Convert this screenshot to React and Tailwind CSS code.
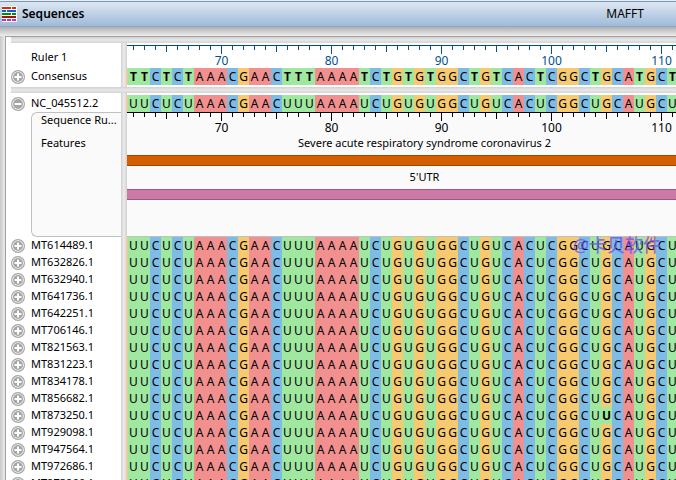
import clsx from "clsx";

const FIRST_POSITION = 62;
const RNA = "UUCUCUAAACGAACUUUAAAAUCUGUGUGGCUGUCACUCGGCUGCAUGCU";
const CONSENSUS = RNA.replaceAll("U", "T");

const sequences = [
  { name: "MT614489.1", bases: RNA },
  { name: "MT632826.1", bases: RNA },
  { name: "MT632940.1", bases: RNA },
  { name: "MT641736.1", bases: RNA },
  { name: "MT642251.1", bases: RNA },
  { name: "MT706146.1", bases: RNA },
  { name: "MT821563.1", bases: RNA },
  { name: "MT831223.1", bases: RNA },
  { name: "MT834178.1", bases: RNA },
  { name: "MT856682.1", bases: RNA },
  { name: "MT873250.1", bases: RNA.slice(0, 43) + "U" + RNA.slice(44), variant: 43 },
  { name: "MT929098.1", bases: RNA },
  { name: "MT947564.1", bases: RNA },
  { name: "MT972686.1", bases: RNA },
  { name: "MT973966.1", bases: RNA },
];

const baseColors = {
  A: "bg-[#f29090]",
  C: "bg-[#7ebce8]",
  G: "bg-[#f8ca70]",
  U: "bg-[#a0e8a0]",
  T: "bg-[#a0e8a0]",
};

function ToggleButton({ name, open }) {
  return (
    <button
      type="button"
      aria-expanded={Boolean(open)}
      aria-label={name}
      className="flex w-5 shrink-0 items-center"
    >
      <svg viewBox="0 0 14 14" className="size-3.5 shrink-0">
        <circle cx="7" cy="7" r="6.4" fill="#fff" stroke="#a6a6a6" strokeWidth="1.2" />
        <circle cx="7" cy="7" r="5" fill="#a6a6a6" />
        <path d={open ? "M3.5 7h7" : "M3.5 7h7M7 3.5v7"} stroke="#fff" strokeWidth="2" />
      </svg>
    </button>
  );
}

function Label({ name, open }) {
  return (
    <div className="flex h-[17px] items-center pl-[5px]">
      <ToggleButton name={name} open={open} />
      <span className="pb-0.5 leading-[15px]">{name}</span>
    </div>
  );
}

function Bases({ bases, variant }) {
  return (
    <div className="flex h-[17px] border-l border-[#f8ca70] text-[12px] leading-[17px]">
      {bases.split("").map((base, i) => (
        <span
          key={i}
          className={clsx(
            "w-[11px] shrink-0 text-center",
            baseColors[base],
            (base === "T" || i === variant) && "font-bold"
          )}
        >
          {base}
        </span>
      ))}
    </div>
  );
}

function Ruler({ blue }) {
  return (
    <div
      className={clsx(
        "flex h-[23px] border-t pl-px text-[12px]",
        blue ? "border-[#004a80] text-[#005090]" : "border-black text-black"
      )}
    >
      {RNA.split("").map((_, i) => {
        const position = FIRST_POSITION + i;
        const major = position % 10 === 0;
        const medium = position % 5 === 0;
        return (
          <div key={i} className="flex w-[11px] shrink-0 flex-col items-center">
            <div
              className={clsx(
                "w-px shrink-0 bg-current",
                major ? "h-2" : medium ? "h-1.5" : "h-1"
              )}
            />
            {major && <span className="leading-[14px]">{position}</span>}
          </div>
        );
      })}
    </div>
  );
}

function Splitter() {
  return (
    <div className="h-1.5 w-full shrink-0 bg-linear-to-b from-[#d0d0d0] via-[#e8e8e8] to-[#d4d4d4]" />
  );
}

function Divider() {
  return (
    <div className="w-1.5 shrink-0 bg-linear-to-r from-[#d0d0d0] via-[#ececec] to-[#d0d0d0]" />
  );
}

function TitleBar() {
  return (
    <header className="flex h-[26px] shrink-0 items-center border-t border-b border-t-[#7299bd] border-b-[#8aa9c8] bg-linear-to-b from-[#dde7f2] to-[#9fbbd9] pl-[2px] text-[12px]">
      <svg viewBox="0 0 15 16" className="h-4 w-[15px]">
        <rect width="15" height="16" rx="1" fill="#fff" />
        <path d="M0 2h9M10 2h4" stroke="#e62600" strokeWidth="2" />
        <path d="M0 5h4M5 5h9" stroke="#0066dc" strokeWidth="2" />
        <path d="M0 8h9M10 8h4" stroke="#009000" strokeWidth="2" />
        <path d="M0 11h14" stroke="#a01800" strokeWidth="2" />
        <path d="M0 14h4M5 14h4M10 14h4" stroke="#d030a0" strokeWidth="2" />
      </svg>
      <h1 className="flex-1 pb-0.5 pl-[5px] font-semibold">Sequences</h1>
      <span className="pr-8 pb-0.5">MAFFT</span>
    </header>
  );
}

function App() {
  return (
    <div className="flex h-screen flex-col overflow-hidden bg-[#eee] pt-px font-['Noto_Sans','Noto_Sans_CJK_SC',sans-serif] text-[11px] leading-[17px] text-black">
      <TitleBar />
      <div className="h-[9px] shrink-0 bg-linear-to-b from-[#b0b0b0] to-[#eee]" />
      <main className="flex min-h-0 flex-1">
        <div className="w-[5px] shrink-0 bg-linear-to-r from-[#c8c8c8] to-[#ececec]" />
        <div className="flex min-w-0 flex-1 flex-col border-t border-l border-[#a0a0a0] bg-white pl-[5px]">
          <Splitter />

          <section className="flex h-11 shrink-0">
            <div className="w-[110px] shrink-0 pt-[5px]">
              <div className="h-5 pl-5">Ruler 1</div>
              <div className="-ml-[5px]">
                <Label name="Consensus" />
              </div>
            </div>
            <Divider />
            <div className="min-w-0 flex-1 overflow-hidden pt-[2px]">
              <Ruler blue />
              <Bases bases={CONSENSUS} />
            </div>
          </section>

          <Splitter />

          <section className="relative flex min-h-0 flex-1 overflow-hidden">
            <div className="w-[110px] shrink-0 pt-[2px]">
              <div className="-ml-[5px]">
                <Label name="NC_045512.2" open />
              </div>
              <div className="ml-5 h-[125px] rounded-l-md border-y border-l border-[#c0c0c0] bg-[#fafafa] pl-[9px] whitespace-nowrap">
                <div className="h-[22px] leading-[14px]">Sequence Ru...</div>
                <div className="leading-[15px]">Features</div>
              </div>
              <div className="-ml-[5px]">
                {sequences.map(({ name }) => (
                  <Label key={name} name={name} />
                ))}
              </div>
            </div>
            <Divider />
            <div className="min-w-0 flex-1 overflow-hidden pt-[2px]">
              <Bases bases={RNA} />
              <div className="flex h-[125px] flex-col border-b border-[#c0c0c0] bg-[#fafafa]">
                <Ruler />
                <div className="h-5 pl-[46px] text-center leading-[15px]">
                  Severe acute respiratory syndrome coronavirus 2
                </div>
                <div className="h-[11px] border-y border-[#a04800] bg-[#d55e00]" />
                <div className="h-[23px] pt-[3px] pl-[46px] text-center leading-[15px]">5'UTR</div>
                <div className="h-[11px] border-y border-[#9a5a7c] bg-[#cc79a7]" />
              </div>
              {sequences.map(({ name, bases, variant }) => (
                <Bases key={name} bases={bases} variant={variant} />
              ))}
            </div>
            <div className="absolute top-[142px] right-[15px] text-[18px] leading-5 font-medium text-[#6a5af0]/80">
              @卡贝软件
            </div>
          </section>
        </div>
      </main>
    </div>
  );
}

export default App;
